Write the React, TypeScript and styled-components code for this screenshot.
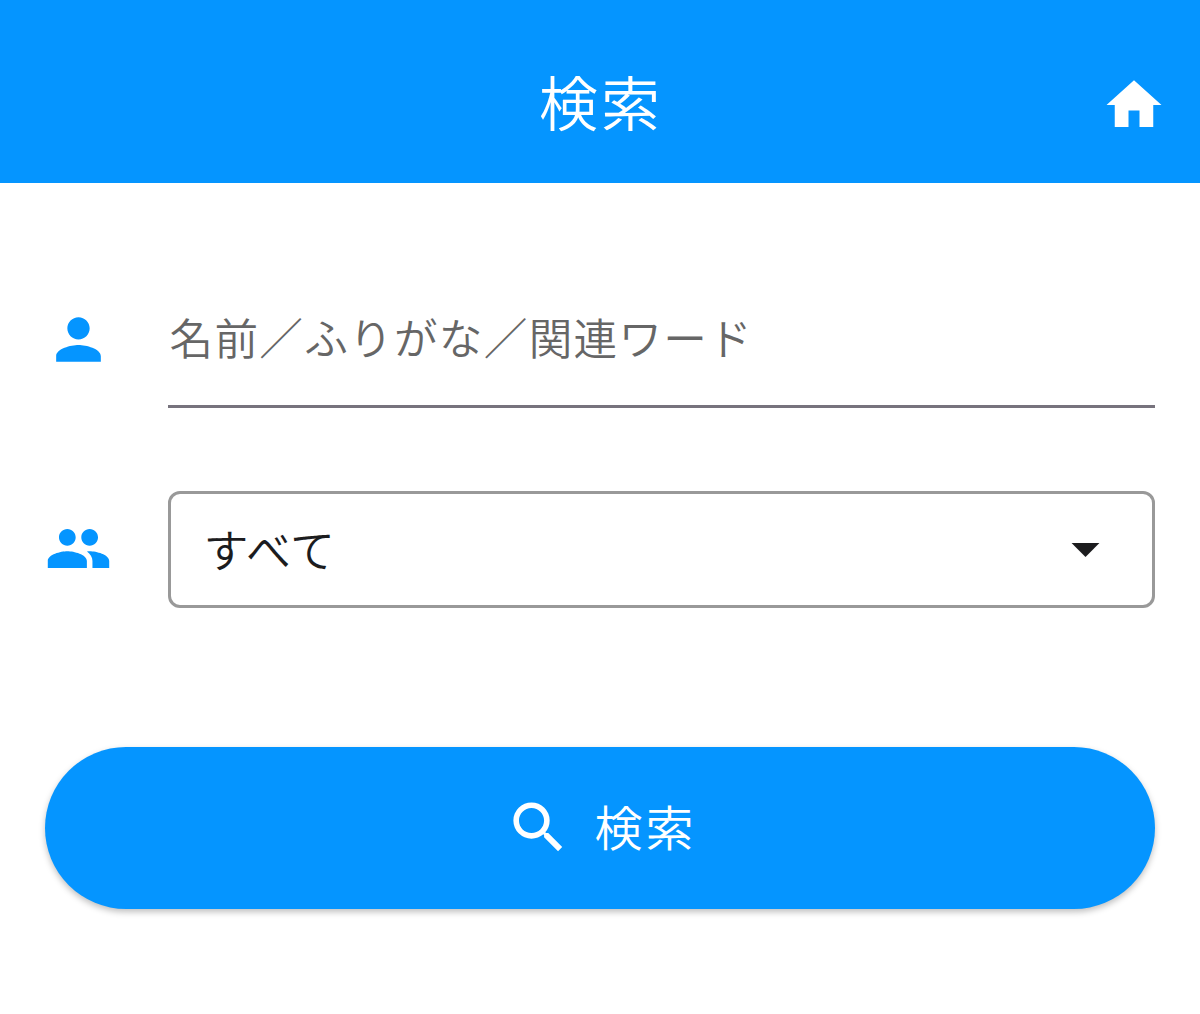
import React from 'react';
import styled, { createGlobalStyle } from 'styled-components';
import { MdHome, MdPerson, MdPeople, MdSearch, MdArrowDropDown } from 'react-icons/md';

const theme = {
    primary: '#0595ff',
    text: '#1c1c1e',
    placeholder: '#666666',
    underline: '#77737d',
    border: '#999999',
};

const App = () => {
    return (
        <Page>
            <GlobalStyle/>
            <Header>
                <Title>検索</Title>
                <HomeLink href="#" aria-label="ホーム">
                    <MdHome size={66}/>
                </HomeLink>
            </Header>
            <Form>
                <Row>
                    <IconBox><MdPerson size={67}/></IconBox>
                    <KeywordField>名前／ふりがな／関連ワード</KeywordField>
                </Row>
                <Row>
                    <IconBox><MdPeople size={67}/></IconBox>
                    <SelectBox>
                        <SelectValue>すべて</SelectValue>
                        <MdArrowDropDown size={67}/>
                    </SelectBox>
                </Row>
                <SearchButton type="button">
                    <MdSearch size={67}/>
                    <ButtonLabel>検索</ButtonLabel>
                </SearchButton>
            </Form>
        </Page>
    );
};

export default App;

const GlobalStyle = createGlobalStyle`
*, *::before, *::after {
    box-sizing: border-box;
}

body {
    margin: 0;
    background-color: #ffffff;
    font-family: 'Noto Sans CJK JP', sans-serif;
    font-weight: 350;
}

svg {
    display: block;
    flex-shrink: 0;
}
`

const Page = styled.div`
width: 1200px;
height: 1014px;
overflow: hidden;
`

const Header = styled.header`
display: grid;
grid-template-columns: 1fr auto 1fr;
align-items: center;
height: 183px;
padding: 27px 33px 0 33px;
background-color: ${theme.primary};
color: #ffffff;
`

const Title = styled.h1`
grid-column: 2;
margin: 0;
padding: 0 0 8px 2px;
font-size: 59px;
font-weight: 350;
letter-spacing: 3px;
line-height: 80px;
`

const HomeLink = styled.a`
justify-self: end;
color: inherit;
`

const Form = styled.form`
display: flex;
flex-direction: column;
padding: 89px 45px 0;
`

const Row = styled.div`
display: flex;
align-items: center;
height: 136px;
margin-bottom: 73px;
`

const IconBox = styled.div`
width: 122.5px;
padding-bottom: 2px;
color: ${theme.primary};
`

const KeywordField = styled.div`
flex: 1;
height: 136px;
padding-left: 2px;
border-bottom: 3px solid ${theme.underline};
color: ${theme.placeholder};
font-size: 43.6px;
letter-spacing: 1.3px;
line-height: 129px;
`

const SelectBox = styled.div`
flex: 1;
display: flex;
align-items: center;
justify-content: space-between;
height: 117px;
padding: 0 33px 2px 33px;
border: 3px solid ${theme.border};
border-radius: 12px;
color: ${theme.text};
`

const SelectValue = styled.span`
font-size: 45px;
letter-spacing: 0.7px;
`

const SearchButton = styled.button`
display: flex;
align-items: center;
justify-content: center;
gap: 22px;
height: 162px;
margin-top: 57px;
padding: 0 0 1px 2px;
border: none;
border-radius: 81px;
background-color: ${theme.primary};
box-shadow: 0 3px 6px rgba(0, 0, 0, 0.25);
color: #ffffff;
font-family: inherit;
`

const ButtonLabel = styled.span`
padding-bottom: 5px;
font-size: 48px;
font-weight: 350;
letter-spacing: 3px;
`
